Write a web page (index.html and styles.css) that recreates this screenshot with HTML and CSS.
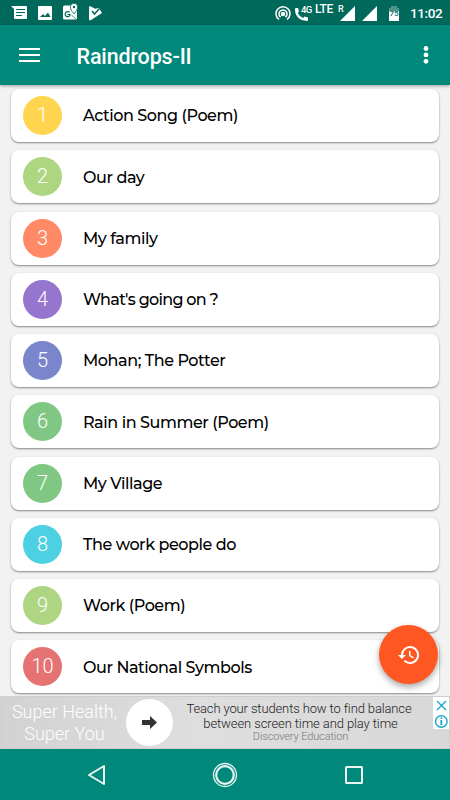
FILE: index.html
```html
<!DOCTYPE html>
<html lang="en">
<head>
<meta charset="utf-8">
<title>Raindrops-II</title>
<link rel="stylesheet" href="styles.css">
</head>
<body>
<div class="screen">
  <div class="status">
    <div class="notices">
      <svg width="17" height="14" viewBox="0 0 17 14"><path fill="#fff" d="M0 0H15Q16 0 16 1V12Q16 13 15 13H4Q3 13 3 12V3Z"/><path stroke="#00695c" stroke-width="1.2" d="M5 3.5H14M5 6.5H14M5 9.5H11"/></svg>
      <svg width="14" height="14" viewBox="0 0 14 14"><rect width="14" height="14" rx="1" fill="#fff"/><path fill="#00695c" d="M2 11L5 8L7 10L10 6.5L12.5 11Z"/></svg>
      <svg width="16" height="17" viewBox="0 0 16 17"><rect y="2.500" width="14" height="14" rx="1.500" fill="#fff"/><path d="M8.500 12L13 16" fill="none" stroke="#00695c" stroke-width=".7"/><path d="M6.500 9.500A2.500 2.500 0 1 0 7 12V11.500H4.500" fill="none" stroke="#00695c" stroke-width="1.200"/><path fill="#fff" stroke="#00695c" stroke-width=".8" d="M11 11Q7.300 7 7.300 4A3.700 3.700 0 0 1 14.700 4Q14.700 7 11 11Z"/><circle cx="11" cy="4" r="1.200" fill="#00695c"/></svg>
      <svg width="14" height="15" viewBox="0 0 14 15"><path fill="#fff" d="M1 0L6 2.800L10 2L13 7L2 14Q0 15 0 13V1Z"/><path fill="none" stroke="#00695c" stroke-width="1.500" d="M3 5L5.500 8L10.500 2.500"/></svg>
    </div>
    <div class="radio">
      <svg class="cast" width="16" height="15" viewBox="0 0 16 15" fill="none" stroke="#fff" stroke-width="1.500"><circle cx="8" cy="8" r="1.500" fill="#fff"/><path d="M4 13.500A7 7 0 1 1 12 13.500M5.600 11.200A4 4 0 1 1 10.400 11.200"/></svg>
      <svg class="call" width="13" height="13" viewBox="0 0 13 13"><path fill="#fff" d="M0 1Q0 0 1 0H3L4 3.500L2.700 5Q4.500 8.500 8 10L9.500 8.600L13 9.600V12Q13 13 12 13Q0 12 0 1Z"/></svg>
      <span class="g4">4G</span><span class="lte">LTE</span><span class="roam">R</span>
      <svg class="sig" width="15" height="15" viewBox="0 0 15 15"><path fill="#fff" d="M15 0V15H0Z"/></svg>
      <svg class="sig2" width="15" height="15" viewBox="0 0 15 15"><path fill="#fff" d="M15 0V15H0Z"/></svg>
      <span class="battery">75</span>
      <span class="clock">11:02</span>
    </div>
  </div>
  <header class="appbar">
    <svg class="menu" width="21" height="14" viewBox="0 0 21 14"><path stroke="#fff" stroke-width="2" d="M0 1H21M0 7H21M0 13H21"/></svg>
    <h1>Raindrops-II</h1>
    <svg class="more" width="6" height="18" viewBox="0 0 6 18" fill="#fff"><circle cx="3" cy="2.500" r="2.400"/><circle cx="3" cy="8.900" r="2.400"/><circle cx="3" cy="15.300" r="2.400"/></svg>
  </header>
  <main class="list">
    <div class="card"><span class="num yellow">1</span><span class="name">Action Song (Poem)</span></div>
    <div class="card"><span class="num lime">2</span><span class="name">Our day</span></div>
    <div class="card"><span class="num orange">3</span><span class="name">My family</span></div>
    <div class="card"><span class="num purple">4</span><span class="name tight">What's going on ?</span></div>
    <div class="card"><span class="num indigo">5</span><span class="name">Mohan; The Potter</span></div>
    <div class="card"><span class="num green">6</span><span class="name">Rain in Summer (Poem)</span></div>
    <div class="card"><span class="num green">7</span><span class="name">My Village</span></div>
    <div class="card"><span class="num cyan">8</span><span class="name">The work people do</span></div>
    <div class="card"><span class="num lime">9</span><span class="name">Work (Poem)</span></div>
    <div class="card"><span class="num red">10</span><span class="name">Our National Symbols</span></div>
  </main>
  <div class="fab"><svg width="24" height="24" viewBox="0 0 24 24" fill="#fff"><path d="M13 3a9 9 0 0 0-9 9H1l3.890 3.890.07.14L9 12H6a7 7 0 1 1 2.060 4.940l-1.420 1.420A9 9 0 1 0 13 3zm-1 5v5l4.280 2.540.72-1.210-3.500-2.080V8z"/></svg></div>
  <section class="ad">
    <div class="adtitle">Super Health,<br>Super You</div>
    <div class="go"><svg width="15" height="13" viewBox="0 0 15 13"><path fill="#333" d="M0 4H8V0L15 6.500L8 13V9H0Z"/></svg></div>
    <div class="adcopy">Teach your students how to find balance<br><span class="line2">between screen time and play time</span><small>Discovery Education</small></div>
    <div class="adtools"><svg width="16" height="32" viewBox="0 0 16 32" fill="none" stroke="#1aa7cc" stroke-width="1.400"><path d="M4 4L13 13M13 4L4 13"/><circle cx="8.300" cy="24.500" r="5.800"/><path stroke-width="1.800" d="M8.300 23V28M8.300 20.500V22"/></svg></div>
  </section>
  <nav class="nav">
    <svg width="20" height="22" viewBox="0 0 20 22"><path d="M17 2V20L2 11Z" fill="none" stroke="#e8f5f3" stroke-width="2" stroke-linejoin="round"/></svg>
    <svg width="26" height="26" viewBox="0 0 26 26" fill="none" stroke="#e8f5f3"><circle cx="13" cy="13" r="11.500" stroke-width="1.300"/><circle cx="13" cy="13" r="8.800" stroke-width="2.200"/></svg>
    <svg width="20" height="20" viewBox="0 0 20 20"><rect x="2" y="2" width="16" height="16" rx=".5" fill="none" stroke="#e8f5f3" stroke-width="2"/></svg>
  </nav>
</div>
</body>
</html>
```
FILE: styles.css
```css
* { box-sizing: border-box; }
body { margin: 0; font-family: Roboto, sans-serif; }
svg { display: block; flex: none; }
.screen { position: relative; width: 450px; height: 800px; overflow: hidden; display: flex; flex-direction: column; background: #f2f2f2; }
.status { height: 25px; flex: none; display: flex; justify-content: space-between; background: #00695c; color: #fff; }
.notices { display: flex; padding: 6px 0 0 11px; }
.notices svg:nth-child(2) { margin-left: 10px; }
.notices svg:nth-child(3) { margin: -3px 0 0 11px; }
.notices svg:nth-child(4) { margin-left: 10px; }
.radio { display: flex; align-items: flex-start; width: 175px; height: 25px; }
.radio span { flex: none; white-space: nowrap; }
.cast { margin-top: 6px; }
.call { margin: 8px 0 0 4px; }
.g4 { width: 11px; margin: 5px 0 0 -7px; font-size: 9.500px; line-height: 10px; letter-spacing: -.6px; font-weight: 500; }
.lte { width: 20px; margin: 3px 0 0 3px; font-size: 12px; line-height: 12px; font-weight: 500; letter-spacing: -.4px; }
.roam { width: 5px; margin: 5px 0 0 3px; font-size: 9px; line-height: 9px; font-weight: 500; }
.sig { margin: 6px 0 0 -3px; }
.sig2 { margin: 6px 0 0 7px; }
.battery { width: 10px; height: 15px; margin: 6px 0 0 12px; background: linear-gradient(#4f9389 5px, #fff 5px); clip-path: polygon(20% 0, 80% 0, 80% 2px, 100% 2px, 100% 100%, 0 100%, 0 2px, 20% 2px); color: #00695c; font-size: 8px; line-height: 16px; font-weight: 500; text-align: center; }
.clock { margin: 4px 0 0 11px; font-size: 13.500px; line-height: 18px; font-weight: 500; letter-spacing: -.4px; }
.appbar { height: 60px; flex: none; display: flex; align-items: center; padding: 0 21px 0 19px; background: #00897b; color: #fff; box-shadow: 0 1px 3px rgba(0,0,0,.35); z-index: 1; }
.menu { margin-top: -1px; }
h1 { flex: 1; margin: 3px 0 0 36.500px; font-size: 21.500px; line-height: 28px; font-weight: 500; letter-spacing: -.15px; }
.list { height: 611px; flex: none; overflow: hidden; display: flex; flex-direction: column; gap: 8.250px; padding: 4.200px 11px 0; }
.card { height: 53px; flex: none; display: flex; align-items: center; padding-left: 12px; background: #fff; border-radius: 8px; box-shadow: 0 1px 2px rgba(0,0,0,.45); }
.num { width: 39px; height: 39px; border-radius: 50%; color: #fff; font-size: 20px; line-height: 39px; font-weight: 300; text-align: center; }
.name { margin-left: 21px; padding-top: 1.500px; font: 500 16px/24px Montserrat, Inter, sans-serif; letter-spacing: -.43px; color: #000; white-space: nowrap; }
.tight { letter-spacing: -.7px; }
.yellow { background: #ffd54f; }
.lime { background: #aed581; }
.orange { background: #ff8a65; }
.purple { background: #9575cd; }
.indigo { background: #7986cb; }
.green { background: #81c784; }
.cyan { background: #4dd0e1; }
.red { background: #e57373; }
.fab { position: absolute; z-index: 2; left: 379px; top: 625px; width: 59px; height: 59px; border-radius: 50%; background: #ff5722; display: grid; place-items: center; box-shadow: 0 3px 6px rgba(0,0,0,.35); }
.ad { height: 53px; flex: none; display: flex; background: linear-gradient(90deg, #d2d2d2, #dedede 45%, #d8d8d8); border: 1px solid #cfcfcf; }
.adtitle { width: 125px; padding: 4px 0 0 2px; color: #fff; font-size: 18px; line-height: 21.500px; font-weight: 300; text-align: center; white-space: nowrap; }
.adtitle::first-line { letter-spacing: 0; }
.go { width: 47px; height: 47px; margin-top: 2px; border-radius: 50%; background: #fff; display: grid; place-items: center; flex: none; }
.adcopy { width: 251px; padding: 5px 0 0 1px; color: #222; font-size: 13px; line-height: 14.500px; letter-spacing: -.13px; font-weight: 300; text-align: center; white-space: nowrap; }
.line2 { padding-left: 3px; letter-spacing: -.1px; }
.adcopy small { display: block; padding-left: 3px; color: #777; font-size: 11px; line-height: 12px; }
.adtools { width: 16px; height: 32px; margin-left: auto; background: #fff; }
.nav { height: 51px; flex: none; display: grid; grid-template-columns: 193px 64px 193px; align-items: center; justify-items: center; background: #00897b; }
```
